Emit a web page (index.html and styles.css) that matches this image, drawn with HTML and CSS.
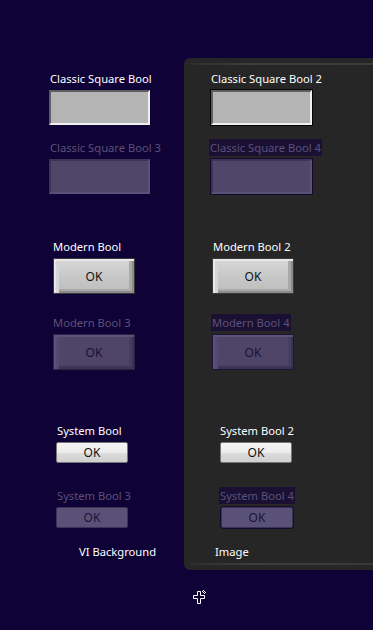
FILE: index.html
```html
<!DOCTYPE html>
<html lang="en">

<head>
    <meta charset="UTF-8">
    <meta name="viewport" content="width=device-width, initial-scale=1.0">
    <title>Boolean Controls</title>
    <link rel="stylesheet" href="styles.css">
</head>

<body>

    <div class="front-panel">

        <!-- VI background column -->
        <div class="col col-left">
            <div class="ctl classic-1">
                <span class="label">Classic Square Bool</span>
                <div class="classic"></div>
            </div>
            <div class="ctl classic-3">
                <span class="label dim">Classic Square Bool 3</span>
                <div class="classic off"></div>
            </div>
            <div class="ctl modern-1">
                <span class="label">Modern Bool</span>
                <div class="modern">OK</div>
            </div>
            <div class="ctl modern-3">
                <span class="label dim">Modern Bool 3</span>
                <div class="modern off">OK</div>
            </div>
            <div class="ctl system-1">
                <span class="label">System Bool</span>
                <div class="system">OK</div>
            </div>
            <div class="ctl system-3">
                <span class="label dim">System Bool 3</span>
                <div class="system off">OK</div>
            </div>
            <div class="caption caption-left">VI Background</div>
        </div>

        <!-- Image decoration -->
        <div class="panel">
            <div class="ctl classic-2">
                <span class="label">Classic Square Bool 2</span>
                <div class="classic framed"></div>
            </div>
            <div class="ctl classic-4">
                <span class="label dim boxed">Classic Square Bool 4</span>
                <div class="classic off framed"></div>
            </div>
            <div class="ctl modern-2">
                <span class="label">Modern Bool 2</span>
                <div class="modern">OK</div>
            </div>
            <div class="ctl modern-4">
                <span class="label dim boxed">Modern Bool 4</span>
                <div class="modern off framed">OK</div>
            </div>
            <div class="ctl system-2">
                <span class="label">System Bool 2</span>
                <div class="system">OK</div>
            </div>
            <div class="ctl system-4">
                <span class="label dim boxed">System Bool 4</span>
                <div class="system off framed">OK</div>
            </div>
            <div class="caption caption-right">Image</div>
        </div>

    </div>

    <!-- mouse cursor -->
    <svg class="cursor" width="16" height="16" viewBox="0 0 16 16">
        <path d="M4.5 1.5h3v4h4v3h-4v5h-3v-5h-4v-3h4z" fill="#0f0236" stroke="#fff" stroke-width="1"/>
        <rect x="10" y="0" width="1" height="1" fill="#fff"/>
        <rect x="9" y="1" width="1" height="1" fill="#fff"/>
        <rect x="11" y="1" width="1" height="1" fill="#fff"/>
        <rect x="10" y="2" width="1" height="1" fill="#fff"/>
        <rect x="12" y="2" width="1" height="1" fill="#fff"/>
        <rect x="11" y="3" width="1" height="1" fill="#fff"/>
    </svg>

</body>

</html>
```

FILE: styles.css
```css
body {
    margin: 0;
    padding: 0;
    height: 630px;
    overflow: hidden;
    background-color: #0f0236;
    font-family: "Noto Sans", Arial, sans-serif;
    font-size: 11.2px;
    color: white;
    position: relative;
}

.front-panel {
    display: flex;
    align-items: flex-start;
}

.col-left {
    width: 184px;
    flex-shrink: 0;
    padding-top: 71px;
    display: flex;
    flex-direction: column;
    align-items: flex-start;
}

.panel {
    position: relative;
    flex-shrink: 0;
    margin-top: 58px;
    width: 200px;
    height: 512px;
    padding-top: 13px;
    box-sizing: border-box;
    background-color: #262626;
    border-radius: 6px 0 0 6px;
    display: flex;
    flex-direction: column;
    align-items: flex-start;
}

/* bevel lines of the decoration */
.panel::before,
.panel::after {
    content: "";
    position: absolute;
    left: 6px;
    right: 0;
    height: 2px;
    background: linear-gradient(to right, #2e2e2e, #3d3d3d 30%, #3a3a3a);
}

.panel::before {
    top: 5px;
}

.panel::after {
    bottom: 5px;
}

.ctl {
    display: flex;
    flex-direction: column;
    align-items: flex-start;
    flex-shrink: 0;
}

.label {
    display: inline-block;
    line-height: 15px;
    white-space: nowrap;
}

.label.dim {
    color: #5c5179;
}

.label.boxed {
    background-color: #1a1033;
    padding: 1px 1px;
    margin-left: -1px;
}

/* Classic square */
.classic {
    width: 97px;
    height: 31px;
    margin-top: 4px;
    background-color: #b4b4b4;
    border: 2px solid;
    border-color: #5e5e5e #f0f0f0 #f0f0f0 #5e5e5e;
}

.classic.off {
    background-color: #4f4669;
    border-color: #3c3456 #5a5276 #5a5276 #3c3456;
}

.classic.framed {
    margin-top: 4px;
    margin-left: 1px;
    margin-bottom: 1px;
    outline: 1px solid #050505;
}

.classic.off.framed {
    outline-color: #14082e;
    margin-top: 3px;
}

/* Modern */
.modern {
    width: 80px;
    height: 34px;
    margin-top: 4px;
    border: 1px solid #3a3a3a;
    background: linear-gradient(to bottom, #d8d8d8, #c8c8c8 50%, #bdbdbd);
    box-shadow: inset 2px 2px 0 #e8e8e8, inset 5px 0 0 #d6d6d6, inset -2px -2px 0 #8c8c8c, inset -5px -4px 0 #a9a9a9;
    color: #111;
    font-size: 12px;
    display: flex;
    align-items: center;
    justify-content: center;
}

.modern.off {
    background: #4e4569;
    border-color: #2b2444;
    box-shadow: inset 2px 2px 0 #5a5278, inset 5px 0 0 #524a70, inset -2px -2px 0 #3a3255, inset -5px -4px 0 #463e62;
    color: #1c1234;
}

.modern.off.framed {
    border-color: #1d1538;
    margin-top: 3px;
}

/* System */
.system {
    width: 70px;
    height: 19px;
    margin-top: 4px;
    border: 1px solid #767676;
    border-radius: 2px;
    background: linear-gradient(to bottom, #f4f4f4 0%, #ececec 50%, #dcdcdc 51%, #d0d0d0 100%);
    color: #111;
    font-size: 12px;
    line-height: 19px;
    text-align: center;
}

.system.off {
    background: #5a5178;
    border-color: #3c3456;
    color: #1c1234;
}

.system.off.framed {
    outline: 1px solid #130a2c;
    margin-top: 3px;
    margin-left: 1px;
    margin-bottom: 1px;
}

/* positions on the VI background */
.classic-1 {
    margin-left: 49px;
}

.classic-1 .label {
    margin-left: 1px;
}

.classic-3 {
    margin-left: 49px;
    margin-top: 15px;
}

.classic-3 .label {
    margin-left: 1px;
}

.modern-1,
.modern-3 {
    margin-left: 53px;
}

.modern-1 {
    margin-top: 45px;
}

.modern-3 {
    margin-top: 21px;
}

.system-1,
.system-3 {
    margin-left: 56px;
}

.system-1 .label,
.system-3 .label {
    margin-left: 1px;
}

.system-1 {
    margin-top: 53px;
}

.system-3 {
    margin-top: 25px;
}

.caption {
    line-height: 15px;
    white-space: nowrap;
}

.caption-left {
    margin-left: 79px;
    margin-top: 16px;
}

/* positions on the image */
.classic-2 {
    margin-left: 26px;
}

.classic-2 .label {
    margin-left: 1px;
}

.classic-4 {
    margin-left: 26px;
    margin-top: 13px;
}

.modern-2 {
    margin-left: 28px;
    margin-top: 44px;
}

.modern-2 .label {
    margin-left: 1px;
}

.modern-4 {
    margin-left: 28px;
    margin-top: 20px;
}

.system-2 {
    margin-left: 36px;
    margin-top: 53px;
}

.system-4 {
    margin-left: 36px;
    margin-top: 24px;
}

.system-4 .label {
    margin-left: -1px;
}

.caption-right {
    margin-left: 31px;
    margin-top: 15px;
}

.cursor {
    position: absolute;
    left: 193px;
    top: 590px;
}
```
